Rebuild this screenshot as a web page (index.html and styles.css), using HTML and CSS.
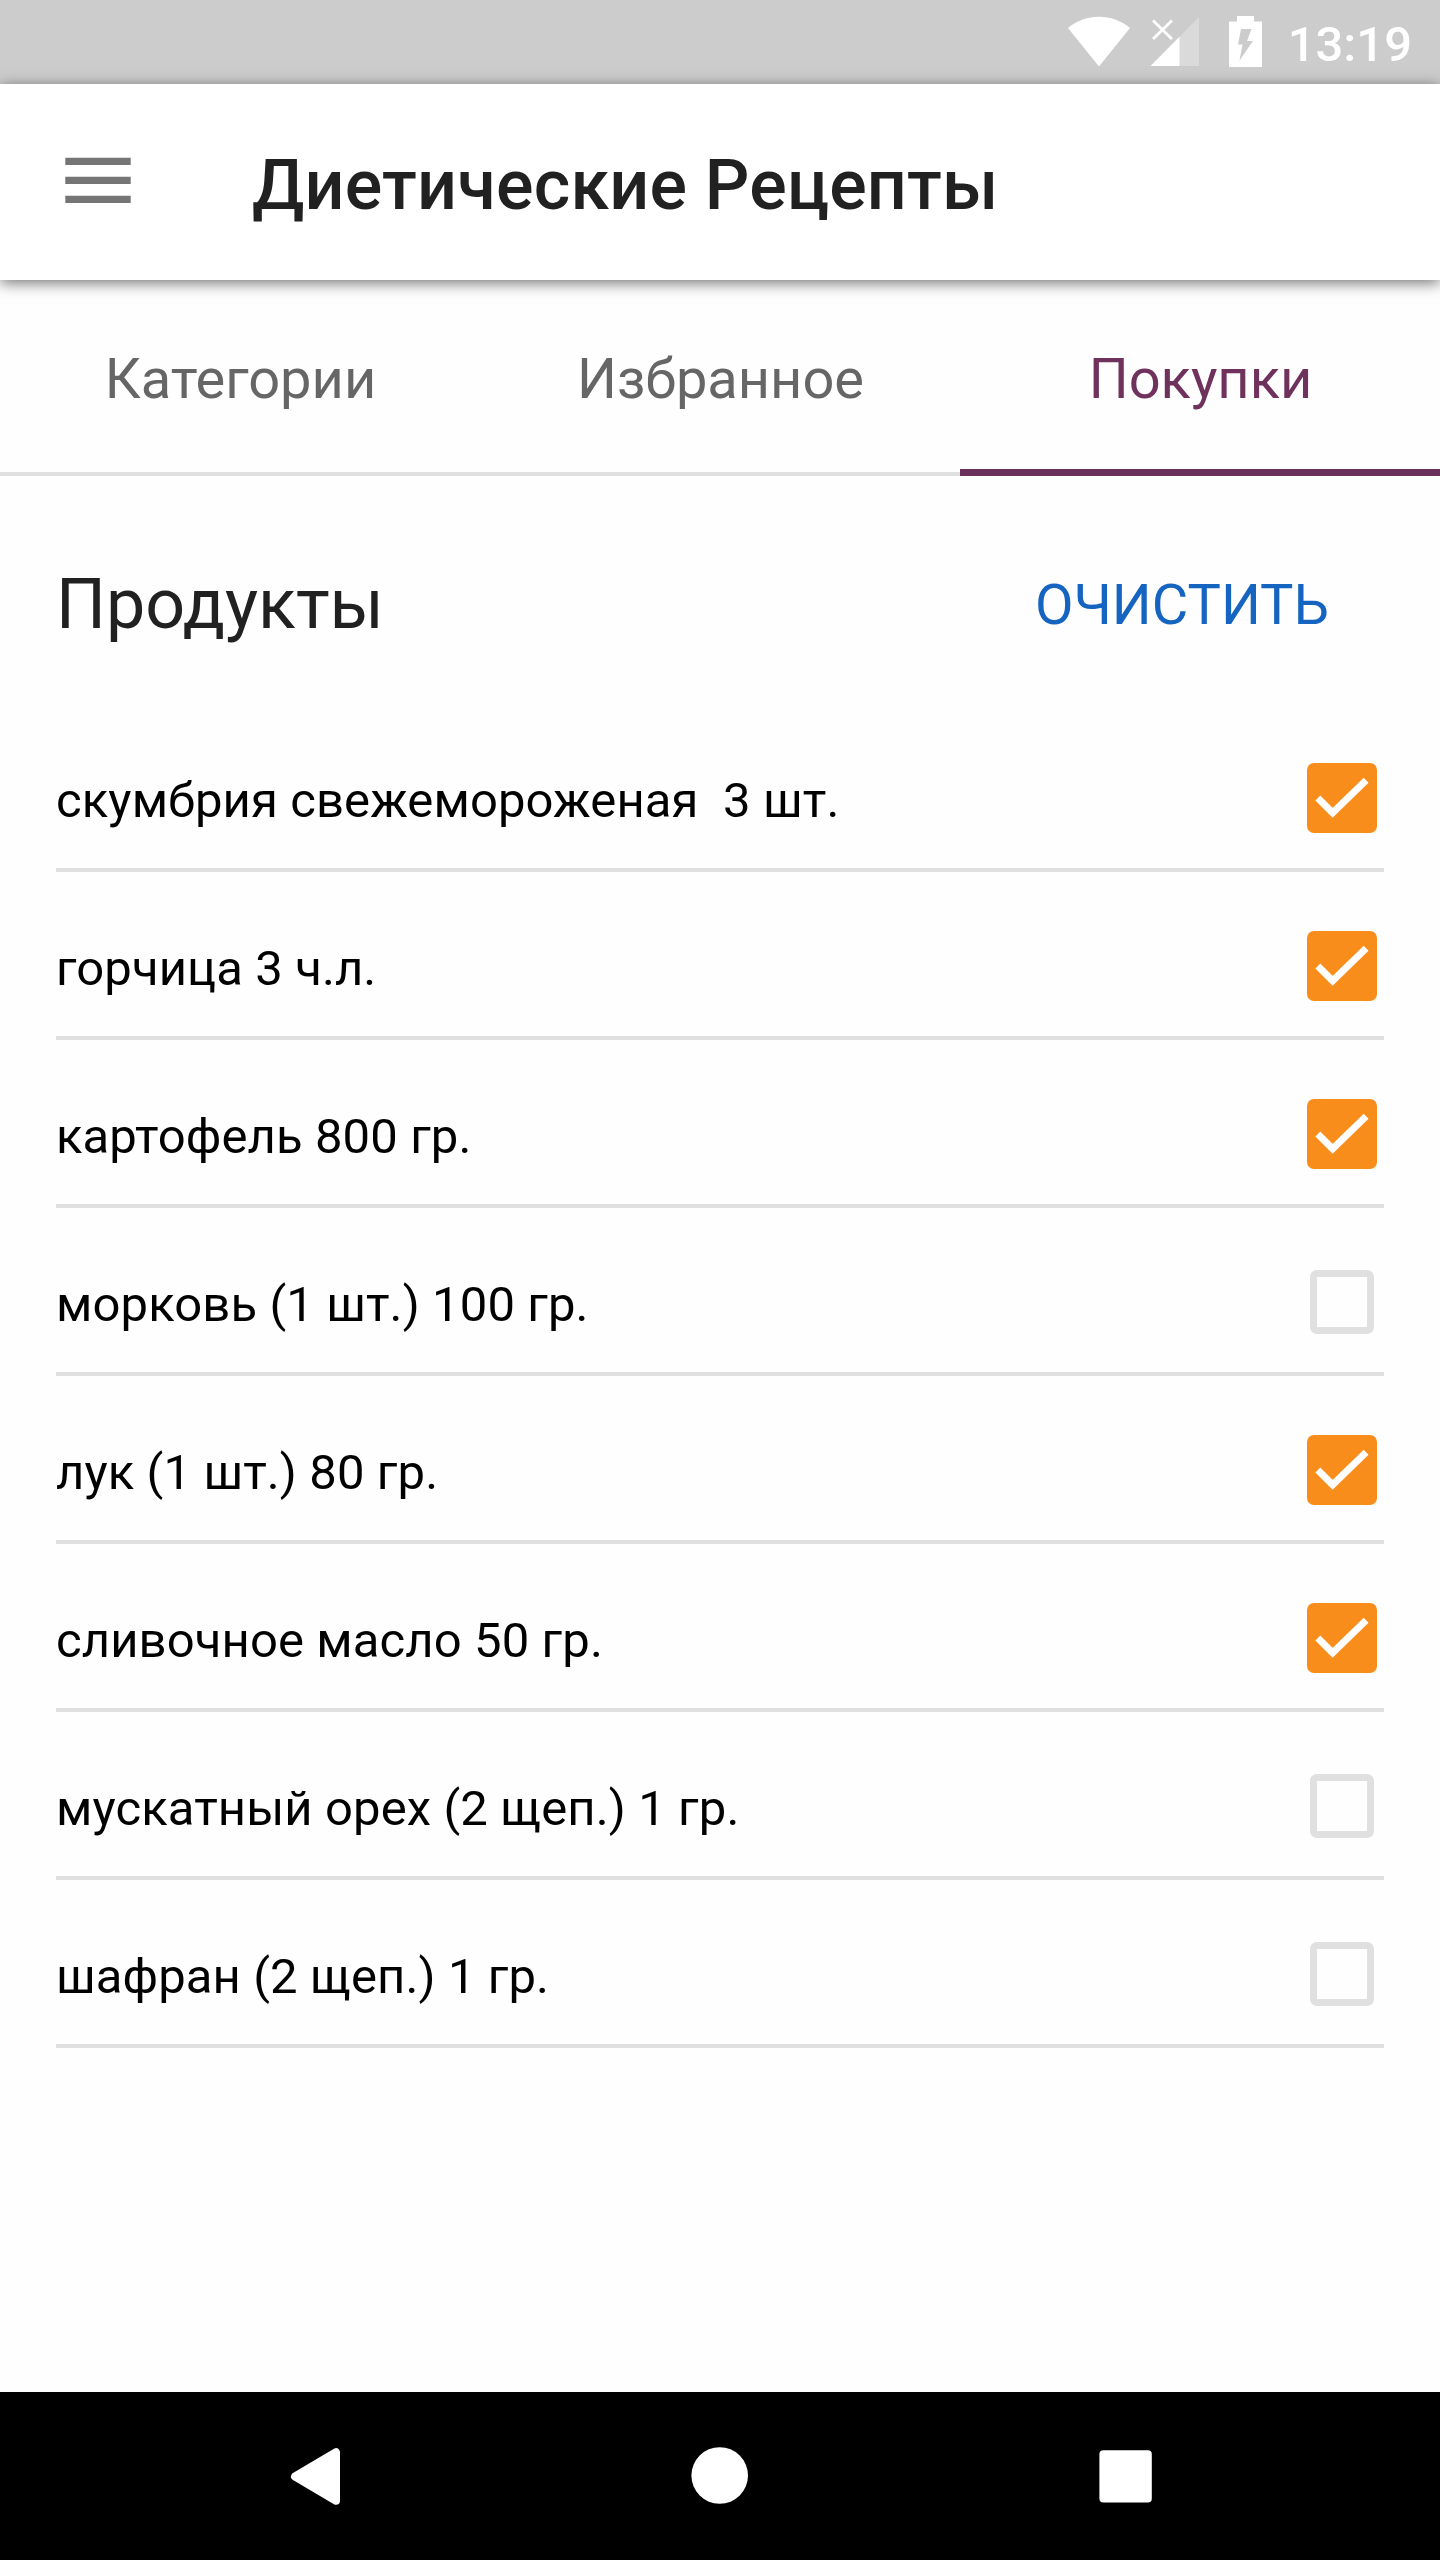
FILE: index.html
```html
<!DOCTYPE html>
<html lang="ru">

<head>
    <meta charset="UTF-8" />
    <meta name="viewport" content="width=device-width, initial-scale=1.0" />
    <title>Диетические Рецепты</title>
    <link rel="stylesheet" href="styles.css">
</head>

<body>
    <div class="statusbar">
        <svg class="wifi" width="64" height="84" viewBox="0 0 64 84">
            <path d="M1 28C19 13 45 13 63 28L32 66.5Z" fill="#fff" />
        </svg>
        <svg class="signal" width="50" height="84" viewBox="0 0 50 84">
            <path d="M0.5 66L49 17V66Z" fill="#dadada" />
            <path d="M0.5 66L29.5 36.7V66Z" fill="#fff" />
            <path d="M3 20.5L22 39M22 20.5L3 39" stroke="#fff" stroke-width="2.8" />
        </svg>
        <svg class="battery" width="33" height="84" viewBox="0 0 33 84">
            <path d="M8 16H25V21.5H33V67H0V21.5H8Z" fill="#fff" />
            <path d="M12 29H22.5L18 41H24L10.5 60.5L13.5 44.5H9Z" fill="#ccc" />
        </svg>
        <span class="clock">13:19</span>
    </div>

    <header class="toolbar">
        <button class="menu" aria-label="Меню">
            <svg width="84" height="84" viewBox="0 0 84 84">
                <path d="M9.3 35.4H74.7M9.3 54.4H74.7M9.3 73.4H74.7" stroke="#757575" stroke-width="7.4" />
            </svg>
        </button>
        <h1>Диетические Рецепты</h1>
    </header>

    <nav class="tabs">
        <a class="tab">Категории</a>
        <a class="tab">Избранное</a>
        <a class="tab active">Покупки</a>
    </nav>

    <main>
        <div class="heading">
            <h2>Продукты</h2>
            <button class="clear">ОЧИСТИТЬ</button>
        </div>

        <ul class="list">
            <li><span>скумбрия свежемороженая  3 шт.</span><i class="box checked"><svg width="70" height="70" viewBox="0 0 71 71"><path d="M11 35.5L26 50.5L60 17.5" /></svg></i></li>
            <li><span>горчица 3 ч.л.</span><i class="box checked"><svg width="70" height="70" viewBox="0 0 71 71"><path d="M11 35.5L26 50.5L60 17.5" /></svg></i></li>
            <li><span>картофель 800 гр.</span><i class="box checked"><svg width="70" height="70" viewBox="0 0 71 71"><path d="M11 35.5L26 50.5L60 17.5" /></svg></i></li>
            <li><span>морковь (1 шт.) 100 гр.</span><i class="box"></i></li>
            <li><span>лук (1 шт.) 80 гр.</span><i class="box checked"><svg width="70" height="70" viewBox="0 0 71 71"><path d="M11 35.5L26 50.5L60 17.5" /></svg></i></li>
            <li><span>сливочное масло 50 гр.</span><i class="box checked"><svg width="70" height="70" viewBox="0 0 71 71"><path d="M11 35.5L26 50.5L60 17.5" /></svg></i></li>
            <li><span>мускатный орех (2 щеп.) 1 гр.</span><i class="box"></i></li>
            <li><span>шафран (2 щеп.) 1 гр.</span><i class="box"></i></li>
        </ul>
    </main>

    <footer class="navbar">
        <svg width="168" height="168" viewBox="0 0 168 168">
            <path d="M65 84.5L106 60.3V108.7Z" fill="#fff" stroke="#fff" stroke-width="8" stroke-linejoin="round" />
        </svg>
        <svg width="168" height="168" viewBox="0 0 168 168">
            <circle cx="83.7" cy="83.5" r="28.3" fill="#fff" />
        </svg>
        <svg width="168" height="168" viewBox="0 0 168 168">
            <rect x="57.4" y="58.2" width="52.4" height="52.4" rx="4" fill="#fff" />
        </svg>
    </footer>
</body>

</html>
```
FILE: styles.css
```css
* {
    box-sizing: border-box;
}

body {
    margin: 0;
    height: 2560px;
    display: flex;
    flex-direction: column;
    font-family: Roboto, "Liberation Sans", sans-serif;
    background: #fefefe;
    color: #212121;
}

h1,
h2,
ul {
    margin: 0;
    padding: 0;
}

svg {
    display: block;
}

button {
    border: none;
    background: none;
    padding: 0;
    font-family: inherit;
    cursor: pointer;
}

.statusbar {
    display: flex;
    justify-content: flex-end;
    height: 84px;
    padding-right: 28px;
    background: #ccc;
}

.signal {
    margin-left: 19px;
}

.battery {
    margin-left: 29px;
}

.clock {
    margin-left: 26px;
    font-size: 49px;
    font-weight: 500;
    line-height: 90px;
    color: #fff;
}

.toolbar {
    display: flex;
    position: relative;
    height: 196px;
    padding: 0 56px;
    background: #fff;
    box-shadow: 0 3px 14px rgba(0, 0, 0, 0.55);
}

.menu {
    height: 84px;
    margin-top: 42px;
}

.toolbar h1 {
    margin-left: 112px;
    font-size: 70px;
    font-weight: 500;
    line-height: 202px;
    letter-spacing: 0.2px;
}

.tabs {
    display: flex;
    height: 196px;
}

.tab {
    flex: 1;
    padding-left: 1px;
    border-bottom: 4px solid #e0e0e0;
    font-size: 56px;
    line-height: 198px;
    text-align: center;
    color: #666;
}

.tab.active {
    border-bottom: 7px solid #672f5a;
    color: #6e325c;
}

main {
    flex: 1;
    padding: 0 56px;
}

.heading {
    display: flex;
    justify-content: space-between;
    align-items: center;
    height: 228px;
    padding: 28px 55px 0 0;
}

.heading h2 {
    font-size: 70px;
    font-weight: 400;
}

.clear {
    padding-top: 2px;
    font-size: 56px;
    color: #1565c0;
}

.list {
    list-style: none;
}

.list li {
    display: flex;
    justify-content: space-between;
    height: 168px;
    border-bottom: 4px solid #e0e0e0;
}

.list span {
    padding-top: 68px;
    font-size: 49px;
    line-height: 58px;
    letter-spacing: 0.11px;
    white-space: pre;
    color: #000;
}

.box {
    width: 64px;
    height: 64px;
    margin: 62px 10px 0 0;
    border: 7px solid #e0e0e0;
    border-radius: 7px;
}

.box.checked {
    width: 70px;
    height: 70px;
    margin: 59px 7px 0 0;
    border: none;
    background: #f98d1b;
}

.box path {
    fill: none;
    stroke: #fff;
    stroke-width: 7;
}

.navbar {
    display: flex;
    justify-content: space-between;
    height: 168px;
    padding: 0 230px;
    background: #000;
}
```
